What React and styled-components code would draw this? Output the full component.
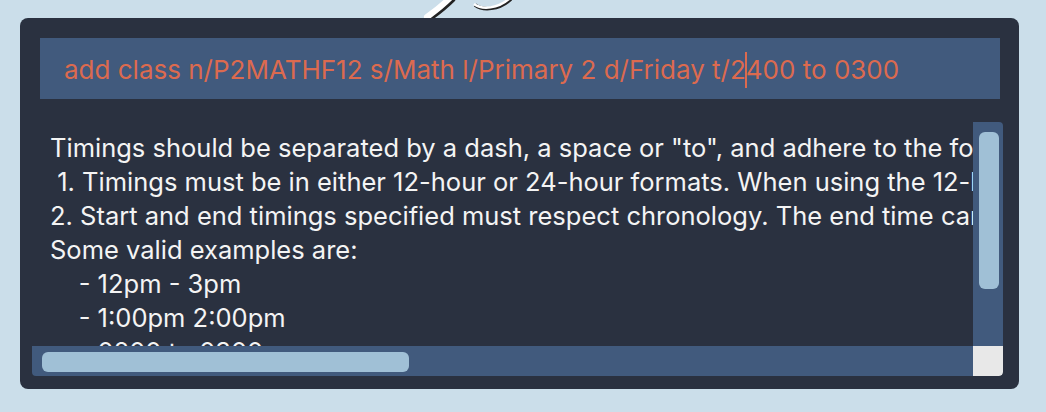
import React from "react";
import styled, { createGlobalStyle } from "styled-components";

const GlobalStyle = createGlobalStyle`
  html, body { margin: 0; padding: 0; }
  body {
    background: #cbdeea;
    font-family: Inter, "Noto Sans", sans-serif;
  }
`;

const Page = styled.div`
  width: 1046px;
  height: 412px;
  box-sizing: border-box;
  padding: 0 27px 0 20px;
  display: flex;
  flex-direction: column;
  overflow: hidden;
`;

const LogoStrip = styled.div`
  height: 18px;
  display: flex;
  align-items: flex-start;
  padding-left: 378px;
  overflow: hidden;
`;

const Panel = styled.div`
  background: #2a3140;
  border-radius: 8px;
  height: 371px;
  box-sizing: border-box;
  padding: 20px 16px 13px 12px;
  display: flex;
  flex-direction: column;
  gap: 23px;
`;

const CommandBox = styled.div`
  margin: 0 3px 0 8px;
  height: 61px;
  background: #415a7d;
  display: flex;
  align-items: center;
  padding: 2px 0 0 24px;
  box-sizing: border-box;
  color: #dc6a4f;
  font-size: 26px;
  white-space: pre;
`;

const Caret = styled.span`
  display: inline-block;
  width: 2px;
  height: 36px;
  margin: 0 -1px 0 -1px;
  background: #dc6a4f;
  vertical-align: middle;
`;

const ResultPane = styled.div`
  flex: 1;
  display: grid;
  grid-template-columns: 1fr 30px;
  grid-template-rows: 1fr 30px;
  border-radius: 4px;
  overflow: hidden;
`;

const ResultText = styled.div`
  overflow: hidden;
  padding: 9px 0 0 18px;
  color: #f4f4f4;
  font-size: 25.5px;
  line-height: 34px;
  white-space: pre;
`;

const Track = styled.div`
  background: #415a7d;
  display: flex;
  flex-direction: ${(p) => (p.$vertical ? "column" : "row")};
  padding: ${(p) => (p.$vertical ? "10px 4px 0 6px" : "6px 0 4px 10px")};
`;

const Thumb = styled.div`
  background: #a0c0d6;
  border-radius: 6px;
  ${(p) => (p.$vertical ? `height: ${p.$size}px;` : `width: ${p.$size}px;`)}
`;

const Corner = styled.div`
  background: #e8e8e8;
  border-bottom-right-radius: 4px;
`;

const lines = [
  'Timings should be separated by a dash, a space or "to", and adhere to the following constraints:',
  " 1. Timings must be in either 12-hour or 24-hour formats. When using the 12-hour format, minutes are optional.",
  "2. Start and end timings specified must respect chronology. The end time cannot be earlier than the start time.",
  "Some valid examples are:",
  "    - 12pm - 3pm",
  "    - 1:00pm 2:00pm",
  "    - 0200 to 0300",
];

export default function App() {
  return (
    <>
      <GlobalStyle />
      <Page>
        <LogoStrip>
          <svg width="130" height="18" viewBox="0 0 130 18">
            <path d="M29 17 C 36 12, 44 6, 52 -2" stroke="#222" strokeWidth="7" strokeLinecap="round" fill="none" transform="translate(2,1)" />
            <path d="M29 17 C 36 12, 44 6, 52 -2" stroke="#fff" strokeWidth="6" strokeLinecap="round" fill="none" />
            <path d="M76 4 C 84 10, 100 9, 112 -2" stroke="#222" strokeWidth="3.5" fill="none" transform="translate(1,1)" />
            <path d="M76 4 C 84 10, 100 9, 112 -2" stroke="#fff" strokeWidth="2.5" fill="none" />
          </svg>
        </LogoStrip>
        <Panel>
          <CommandBox>
            add class n/P2MATHF12 s/Math l/Primary 2 d/Friday t/2<Caret />400 to 0300
          </CommandBox>
          <ResultPane>
            <ResultText>
              {lines.map((l, i) => (
                <div key={i}>{l}</div>
              ))}
            </ResultText>
            <Track $vertical>
              <Thumb $vertical $size={157} />
            </Track>
            <Track>
              <Thumb $size={367} />
            </Track>
            <Corner />
          </ResultPane>
        </Panel>
      </Page>
    </>
  );
}
